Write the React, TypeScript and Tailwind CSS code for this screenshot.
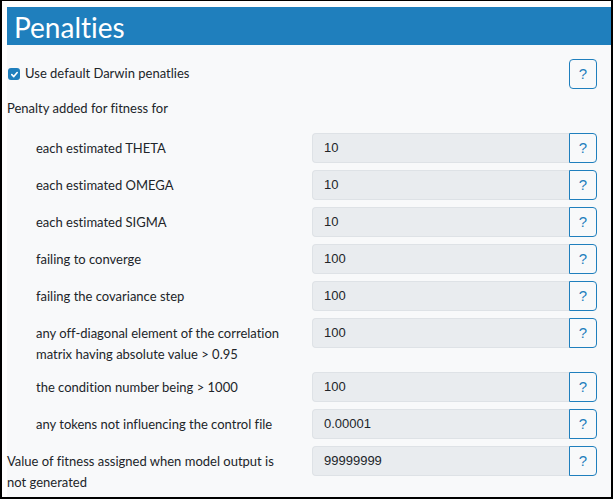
import React from "react";

const lab = "font-['Lato','Liberation_Sans',sans-serif] [font-variant-ligatures:none]";

function Help({ standalone }: { standalone?: boolean }) {
  return (
    <div
      className={`w-[28px] h-[30px] flex items-center justify-center border border-[#1f7fbd] text-[#1f7fbd] bg-[#f8f9fa] text-[15px] font-['Liberation_Sans',sans-serif] ${
        standalone ? "rounded-[4px]" : "rounded-r-[4px]"
      }`}
    >
      ?
    </div>
  );
}

type Row = { label: React.ReactNode; value: string; indent: boolean };

const rows: Row[] = [
  { label: "each estimated THETA", value: "10", indent: true },
  { label: "each estimated OMEGA", value: "10", indent: true },
  { label: "each estimated SIGMA", value: "10", indent: true },
  { label: "failing to converge", value: "100", indent: true },
  { label: "failing the covariance step", value: "100", indent: true },
  {
    label: (
      <>
        any off-diagonal element of the correlation
        <br />
        matrix having absolute value &gt; 0.95
      </>
    ),
    value: "100",
    indent: true,
  },
  { label: "the condition number being > 1000", value: "100", indent: true },
  { label: "any tokens not influencing the control file", value: "0.00001", indent: true },
  {
    label: (
      <>
        Value of fitness assigned when model output is
        <br />
        not generated
      </>
    ),
    value: "99999999",
    indent: false,
  },
];

export default function App() {
  return (
    <div className="w-[613px] h-[499px] border-x-2 border-t border-b-2 border-black bg-white pl-[5px] pt-[6px] overflow-hidden">
      <div className="h-[38px] bg-[#1f7fbd] text-white pl-[7px] flex items-center">
        <span className={`${lab} text-[28px] leading-none pt-[1px]`}>{"Penalt\u200Cies"}</span>
      </div>
      <div className="bg-[#f8f9fa] h-full pr-[14px] text-[#212529]">
        <div className="flex items-center justify-between pt-[14px]">
          <div className="flex items-center gap-[5px] pl-[1px]">
            <div className="w-[12px] h-[12px] rounded-[3px] bg-[#1f7fbd] flex items-center justify-center">
              <svg width="9" height="9" viewBox="0 0 10 10">
                <path d="M2 5.2 L4.2 7.3 L8 2.8" stroke="white" strokeWidth="1.8" fill="none" strokeLinecap="round" strokeLinejoin="round" />
              </svg>
            </div>
            <span className={`${lab} text-[13px]`}>Use default Darwin penatlies</span>
          </div>
          <Help standalone />
        </div>
        <div className={`${lab} text-[13px] leading-[21px] mt-[9px]`}>Penalty added for fitness for</div>
        <div className="flex flex-col gap-[7px] mt-[14px]">
          {rows.map((r, i) => (
            <div key={i} className="flex items-start">
              <div
                className={`${lab} text-[13px] leading-[21px] pt-[5px] whitespace-nowrap w-[307px] ${
                  r.indent ? "pl-[29px]" : "pl-0"
                }`}
              >
                {r.label}
              </div>
              <div className="flex">
                <div className="w-[257px] h-[30px] bg-[#e9ecef] border border-r-0 border-[#dee2e6] rounded-l-[4px] flex items-center pl-[11px] text-[13px] font-['Liberation_Sans',sans-serif] text-[#212529]">
                  {r.value}
                </div>
                <Help />
              </div>
            </div>
          ))}
        </div>
      </div>
    </div>
  );
}
